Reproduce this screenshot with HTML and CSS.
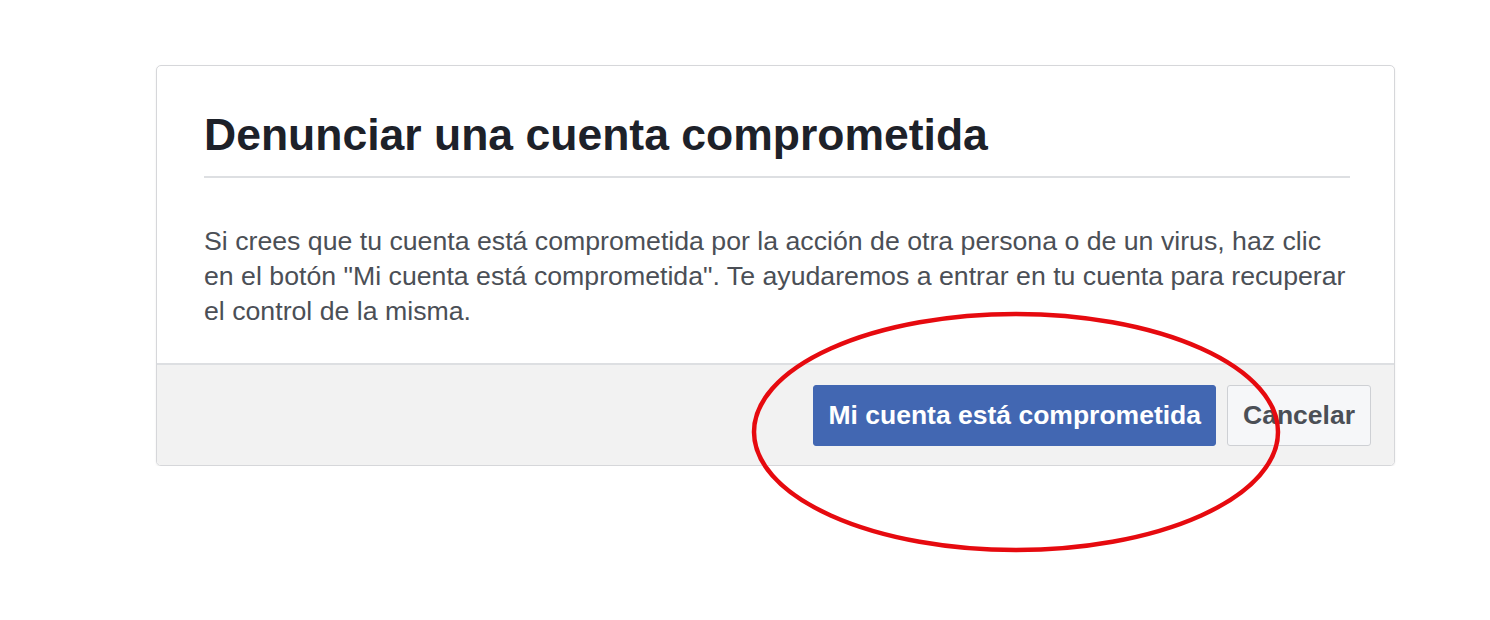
FILE: index.html
```html
<!DOCTYPE html>
<html lang="es">

<head>
    <title>Denunciar una cuenta comprometida</title>
    <link rel="stylesheet" href="styles.css">
</head>

<body>
    <div class="dialog">
        <div class="dialog-body">
            <h1 class="dialog-title">Denunciar una cuenta comprometida</h1>
            <p class="dialog-text">Si crees que tu cuenta está comprometida por la acción de otra persona o de un virus, haz clic<br>en el botón "Mi cuenta está comprometida". Te ayudaremos a entrar en tu cuenta para recuperar el control de la misma.</p>
        </div>
        <div class="dialog-footer">
            <button type="button" class="btn btn-primary">Mi cuenta está comprometida</button>
            <button type="button" class="btn btn-cancel">Cancelar</button>
        </div>
    </div>

    <svg class="highlight" width="540" height="250" viewBox="0 0 540 250">
        <ellipse cx="270" cy="124" rx="262" ry="118" fill="none" stroke="#e60a0f" stroke-width="4.5" />
    </svg>
</body>

</html>
```

FILE: styles.css
```css
body {
    font-family: "Liberation Sans", Arial, sans-serif;
    background-color: #fff;
    margin: 0;
    padding: 65px 0 0 156px;
}

.dialog {
    width: 1237px;
    background-color: #fff;
    border: 1px solid #d6d7da;
    border-radius: 5px;
    box-shadow: 0 1px 2px rgba(0, 0, 0, 0.08);
    overflow: hidden;
}

.dialog-body {
    padding: 45px 44px 34px 47px;
}

.dialog-title {
    margin: 0;
    padding-bottom: 17px;
    font-size: 44.5px;
    line-height: 48px;
    font-weight: bold;
    color: #1d2129;
    border-bottom: 2px solid #dddfe2;
}

.dialog-text {
    margin: 46px 0 0;
    font-size: 26.7px;
    line-height: 35px;
    color: #4b4f56;
}

.dialog-footer {
    display: flex;
    justify-content: flex-end;
    gap: 11px;
    padding: 20px 23px 19px;
    background-color: #f2f2f2;
    border-top: 2px solid #dddfe2;
}

.btn {
    height: 61px;
    padding: 0 14px;
    font-family: "Liberation Sans", Arial, sans-serif;
    font-size: 26.5px;
    font-weight: bold;
    border-radius: 3px;
    cursor: pointer;
}

.btn-primary {
    background-color: #4267b2;
    border: 1px solid #4267b2;
    color: #fff;
}

.btn-cancel {
    padding: 0 15px;
    background-color: #f6f7f9;
    border: 1px solid #ced0d4;
    color: #4b4f56;
}

.highlight {
    position: absolute;
    left: 746px;
    top: 308px;
}
```
